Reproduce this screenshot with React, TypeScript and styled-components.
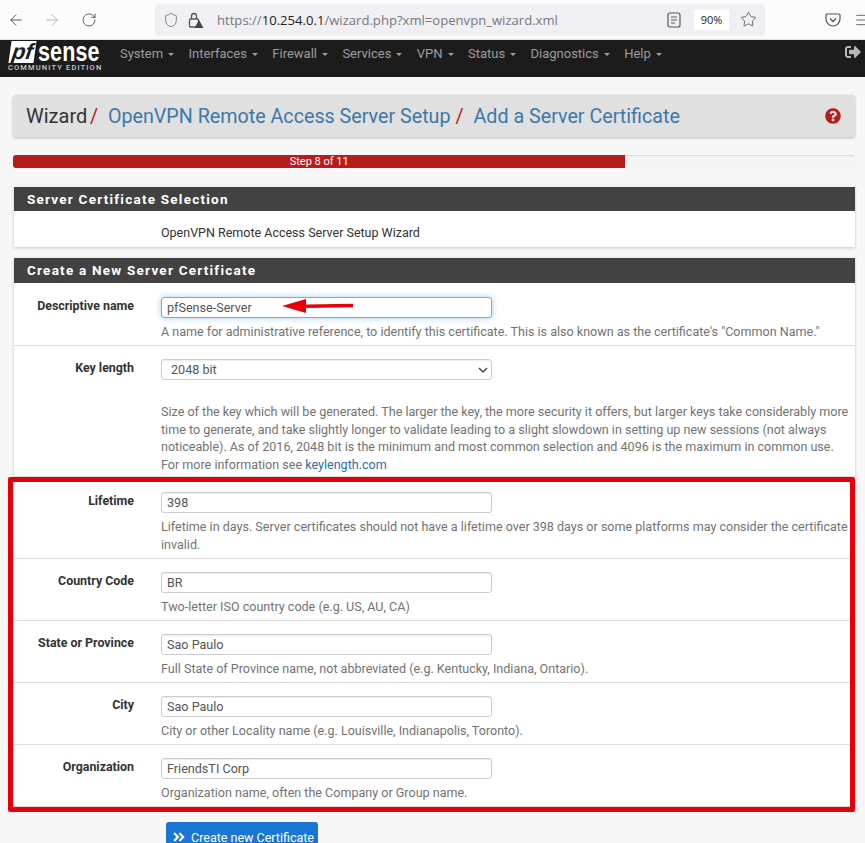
import styled, { createGlobalStyle } from 'styled-components';
import { ArrowLeft, ArrowRight, RotateCw, Shield, Star, Menu } from 'lucide-react';
import { FaQuestionCircle, FaSignOutAlt, FaAngleDoubleRight } from 'react-icons/fa';

const GlobalStyle = createGlobalStyle`
  html, body { margin: 0; padding: 0; background: #f7f7f7; }
  body { font-family: Roboto, "Liberation Sans", sans-serif; font-size: 12.5px; color: #333; height: 843px; overflow: hidden; }
  * { box-sizing: border-box; }
`;

const Chrome = styled.div`
  height: 40px;
  background: #fbfbfc;
  display: flex;
  align-items: center;
  padding: 0 0 0 7px;
  border-bottom: 1px solid #e2e2e2;
  color: #56565a;
  overflow: hidden;
`;

const ChromeBtn = styled.span<{ $dim?: boolean; $left?: number }>`
  display: inline-flex;
  flex-shrink: 0;
  width: 20px;
  margin-right: 16px;
  margin-left: ${p => p.$left ?? 0}px;
  color: ${p => (p.$dim ? '#b4b4b8' : '#56565a')};
`;

const UrlBar = styled.div`
  width: 610px;
  height: 32px;
  margin-left: 38px;
  background: #f0f0f4;
  border-radius: 4px;
  display: flex;
  align-items: center;
  padding: 0 8px;
  font-family: "Open Sans", sans-serif;
  font-size: 13.1px;
  color: #77777c;
  flex-shrink: 0;
`;

const Url = styled.span`
  margin-left: 13px;
  flex: 1;
  b { font-weight: 400; color: #222; }
`;

const Zoom = styled.span`
  width: 35px;
  height: 20px;
  background: #fff;
  color: #222;
  font-size: 11px;
  display: flex;
  align-items: center;
  justify-content: center;
  margin: 0 11px 0 13px;
`;

const Nav = styled.nav`
  height: 37px;
  background: #1c1c1c;
  display: flex;
  padding: 0 4px 0 8px;
  position: relative;
  overflow: hidden;
`;

const Logo = styled.div`
  width: 104px;
  color: #fff;
  margin-right: 8px;
  flex-shrink: 0;
`;

const LogoTop = styled.div`
  display: flex;
  align-items: center;
  height: 23px;
  padding-left: 2px;
  font-family: "Liberation Sans", sans-serif;
  font-weight: 700;
  font-size: 21.5px;
`;

const LogoPf = styled.span`
  background: #fff;
  color: #1c1c1c;
  font-style: italic;
  width: 25px;
  height: 22px;
  line-height: 21px;
  text-align: center;
  font-size: 22px;
  margin-right: 3px;
  transform: skewX(-8deg);
`;

const LogoSense = styled.span`
  display: inline-block;
  letter-spacing: 0.15px;
  transform: scaleY(1.3);
  line-height: 22px;
`;

const LogoSub = styled.div`
  font-size: 7.5px;
  font-weight: 500;
  letter-spacing: 1.15px;
  line-height: 9px;
  margin-top: 0;
  color: #ccc;
  white-space: nowrap;
`;

const NavItem = styled.span`
  color: #9d9d9d;
  font-size: 13px;
  line-height: 27px;
  margin-right: 14.4px;
  white-space: nowrap;
  &::after {
    content: '';
    display: inline-block;
    margin-left: 5px;
    vertical-align: 2px;
    border-top: 3px solid #9d9d9d;
    border-left: 3px solid transparent;
    border-right: 3px solid transparent;
  }
`;

const Logout = styled.span`
  margin-left: auto;
  color: #b9b9b9;
  font-size: 16px;
  padding-top: 4px;
`;

const Page = styled.main`
  padding: 18px 10px 0 13px;
`;

const TitleBar = styled.header`
  height: 42px;
  background: #e0e0e0;
  border-radius: 3px;
  box-shadow: 0 1px 3px rgba(0, 0, 0, 0.25);
  display: flex;
  align-items: center;
  padding: 0 14px 0 13px;
  font-size: 19.7px;
  color: #333;
  a { color: #3c78aa; margin-left: 5px; }
  i { color: #b71c1c; font-style: normal; margin: 0 0 0 5px; }
`;

const TitleRoot = styled.span`
  font-size: 20px;
  margin-right: -2.4px;
`;

const TitleHelp = styled.span`
  margin-left: auto;
  color: #b71c1c;
  font-size: 16px;
  display: flex;
`;

const Progress = styled.div`
  height: 13px;
  margin: 18px 0 19px;
  background: #f5f5f5;
  border-radius: 3px;
  box-shadow: inset 0 1px 1px rgba(0, 0, 0, 0.12);
  overflow: hidden;
`;

const ProgressFill = styled.div`
  height: 13px;
  background: #b71c1c;
  color: #fff;
  font-size: 11px;
  line-height: 13px;
  text-align: center;
`;

const Panel = styled.section`
  background: #fff;
  margin: 0 0 11px 1px;
  box-shadow: 0 1px 3px rgba(0, 0, 0, 0.2);
`;

const PanelHead = styled.h2<{ $h: number }>`
  margin: 0;
  height: ${p => p.$h}px;
  line-height: ${p => p.$h}px;
  background: #424242;
  color: #fff;
  font-size: 13.5px;
  font-weight: 700;
  letter-spacing: 1.23px;
  padding-left: 13px;
`;

const Intro = styled.div`
  height: 36px;
  line-height: 28px;
  padding: 8px 0 0 147px;
  color: #333;
`;

const Row = styled.div<{ $h: number; $top?: number }>`
  height: ${p => p.$h}px;
  display: flex;
  padding-top: ${p => p.$top ?? 13}px;
  & + & { border-top: 1px solid #ddd; }
`;

const Label = styled.label`
  width: 120px;
  text-align: right;
  font-weight: 700;
  font-size: 12.4px;
  color: #333;
  line-height: 17px;
`;

const Field = styled.div`
  margin-left: 27px;
  flex: 1;
  min-width: 0;
  position: relative;
`;

const Input = styled.div<{ $focus?: boolean }>`
  width: 331px;
  height: 21px;
  line-height: 19px;
  padding-left: 5px;
  color: #555;
  font-size: 12.6px;
  background: #fff;
  border: 1px solid ${p => (p.$focus ? '#66afe9' : '#ccc')};
  border-radius: 3px;
  box-shadow: ${p => (p.$focus ? '0 0 6px rgba(102, 175, 233, 0.6)' : 'inset 0 1px 1px rgba(0, 0, 0, 0.075)')};
`;

const Select = styled(Input)`
  padding-left: 9px;
  display: flex;
  align-items: center;
  justify-content: space-between;
  padding-right: 3px;
  svg { display: block; }
`;

const Help = styled.p<{ $top?: number }>`
  margin: ${p => p.$top ?? 5}px 0 0;
  color: #737373;
  line-height: 17.5px;
  font-size: 12.55px;
  a { color: #2b6ea6; }
`;

const ArrowMark = styled.svg`
  position: absolute;
  left: 120px;
  top: 0;
`;

const Highlight = styled.div`
  position: relative;
  border-top: 1px solid #ddd;
  &::after {
    content: '';
    position: absolute;
    left: -6px;
    right: 0;
    top: 0;
    bottom: -6px;
    border: 5px solid #e6000a;
    border-radius: 2px;
    pointer-events: none;
  }
`;

const Submit = styled.button`
  display: flex;
  align-items: center;
  gap: 5px;
  margin: 16px 0 0 153px;
  height: 30px;
  padding: 0 4px 0 6px;
  border: none;
  border-radius: 3px;
  background: #1976d2;
  color: #fff;
  font-family: inherit;
  font-size: 12.5px;
`;

const menu = ['System', 'Interfaces', 'Firewall', 'Services', 'VPN', 'Status', 'Diagnostics', 'Help'];

const fields = [
  { label: 'Lifetime', value: '398', h: 81, top: 15, help: 'Lifetime in days. Server certificates should not have a lifetime over 398 days or some platforms may consider the certificate invalid.' },
  { label: 'Country Code', value: 'BR', h: 62, help: 'Two-letter ISO country code (e.g. US, AU, CA)' },
  { label: 'State or Province', value: 'Sao Paulo', h: 62, help: 'Full State of Province name, not abbreviated (e.g. Kentucky, Indiana, Ontario).' },
  { label: 'City', value: 'Sao Paulo', h: 62, help: 'City or other Locality name (e.g. Louisville, Indianapolis, Toronto).' },
  { label: 'Organization', value: 'FriendsTI Corp', h: 62, help: 'Organization name, often the Company or Group name.' },
];

const App = () => {
  return (
    <>
      <GlobalStyle />
      <Chrome>
        <ChromeBtn><ArrowLeft size={18} strokeWidth={1.3} /></ChromeBtn>
        <ChromeBtn $dim><ArrowRight size={18} strokeWidth={1.3} /></ChromeBtn>
        <ChromeBtn $left={2}><RotateCw size={16} strokeWidth={1.4} /></ChromeBtn>
        <UrlBar>
          <Shield size={16} strokeWidth={1.4} />
          <svg width="16" height="18" viewBox="0 0 16 18" style={{ marginLeft: 9 }}>
            <rect x="1.5" y="8" width="9" height="8" rx="1" fill="none" stroke="#56565a" strokeWidth="1.3" />
            <path d="M3.5 8V5a2.5 2.5 0 0 1 5 0v3" fill="none" stroke="#56565a" strokeWidth="1.3" />
            <path d="M11 9l4.5 8h-9z" fill="#44444a" />
          </svg>
          <Url>https://<b>10.254.0.1</b>/wizard.php?xml=openvpn_wizard.xml</Url>
          <svg width="14" height="16" viewBox="0 0 14 16">
            <rect x="1" y="1" width="12" height="14" rx="2" fill="none" stroke="#56565a" strokeWidth="1.2" />
            <path d="M4 5h6M4 8h6M4 11h4" stroke="#56565a" strokeWidth="1.2" />
          </svg>
          <Zoom>90%</Zoom>
          <Star size={17} strokeWidth={1.2} color="#56565a" />
        </UrlBar>
        <svg width="16" height="14" viewBox="0 0 16 14" style={{ marginLeft: 60, flexShrink: 0 }}>
          <path d="M2 1h12a1 1 0 0 1 1 1v4a7 7 0 0 1-14 0V2a1 1 0 0 1 1-1z" fill="none" stroke="#56565a" strokeWidth="1.2" />
          <path d="M5 5.5l3 3 3-3" fill="none" stroke="#56565a" strokeWidth="1.3" />
        </svg>
        <Menu size={16} strokeWidth={1.3} style={{ marginLeft: 13, flexShrink: 0 }} />
      </Chrome>
      <Nav>
        <Logo>
          <LogoTop><LogoPf>pf</LogoPf><LogoSense>sense</LogoSense></LogoTop>
          <LogoSub>COMMUNITY EDITION</LogoSub>
        </Logo>
        {menu.map(m => <NavItem key={m}>{m}</NavItem>)}
        <Logout><FaSignOutAlt /></Logout>
      </Nav>
      <Page>
        <TitleBar>
          <TitleRoot>Wizard</TitleRoot><i>/</i>
          <a>&nbsp;OpenVPN Remote Access Server Setup</a><i>/</i>
          <a>&nbsp;Add a Server Certificate</a>
          <TitleHelp><FaQuestionCircle /></TitleHelp>
        </TitleBar>
        <Progress>
          <ProgressFill style={{ width: `${(8 / 11) * 100}%` }}>Step 8 of 11</ProgressFill>
        </Progress>
        <Panel>
          <PanelHead $h={24}>Server Certificate Selection</PanelHead>
          <Intro>OpenVPN Remote Access Server Setup Wizard</Intro>
        </Panel>
        <Panel>
          <PanelHead $h={25}>Create a New Server Certificate</PanelHead>
          <Row $h={62} $top={14}>
            <Label>Descriptive name</Label>
            <Field>
              <Input $focus>pfSense-Server</Input>
              <ArrowMark width="74" height="18" viewBox="0 0 74 18">
                <path d="M1 9L25 2v5.5l47-.8v3.6l-47 .7V16z" fill="#e6000a" />
              </ArrowMark>
              <Help>A name for administrative reference, to identify this certificate. This is also known as the certificate's "Common Name."</Help>
            </Field>
          </Row>
          <Row $h={131}>
            <Label>Key length</Label>
            <Field>
              <Select>
                2048 bit
                <svg width="10" height="6" viewBox="0 0 10 6"><path d="M1 1l4 4 4-4" fill="none" stroke="#444" strokeWidth="1.4" /></svg>
              </Select>
              <Help $top={23}>
                Size of the key which will be generated. The larger the key, the more security it offers, but larger keys take considerably more time to generate, and take slightly longer to validate leading to a slight slowdown in setting up new sessions (not always noticeable). As of 2016, 2048 bit is the minimum and most common selection and 4096 is the maximum in common use. For more information see <a>keylength.com</a>
              </Help>
            </Field>
          </Row>
          <Highlight>
            {fields.map(f => (
              <Row key={f.label} $h={f.h} $top={f.top}>
                <Label>{f.label}</Label>
                <Field>
                  <Input>{f.value}</Input>
                  <Help>{f.help}</Help>
                </Field>
              </Row>
            ))}
          </Highlight>
        </Panel>
        <Submit><FaAngleDoubleRight size={14} />Create new Certificate</Submit>
      </Page>
    </>
  );
};

export default App;
